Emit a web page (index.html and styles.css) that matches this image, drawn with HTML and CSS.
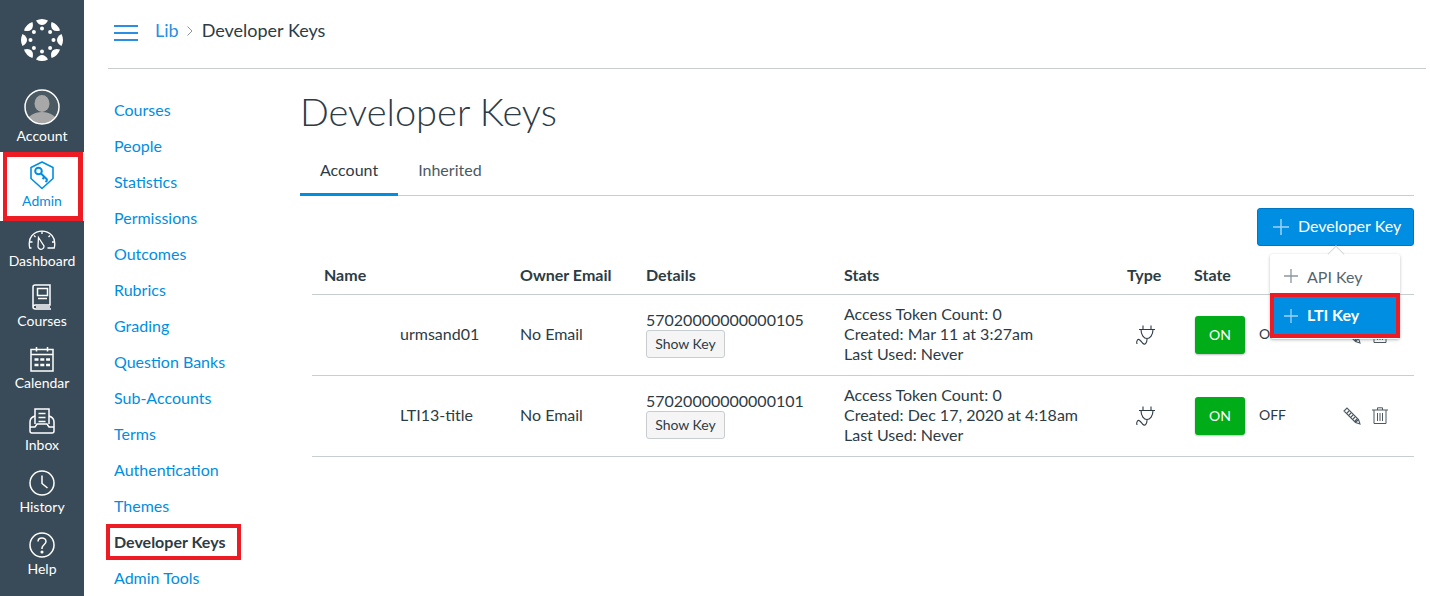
FILE: index.html
```html
<!DOCTYPE html>
<html lang="en">
<head>
<meta charset="utf-8">
<title>Developer Keys</title>
<link rel="stylesheet" href="styles.css">
</head>
<body>
<div class="app">
  <nav class="rail">
    <a class="rail-logo">
      <svg width="44" height="44" viewBox="-22 -22 44 44" fill="#fff">
        <g id="petals">
          <path d="M-6-19.500Q0-22.500 6-19.500Q3.500-15 0-15T-6-19.500Z"/>
          <path transform="rotate(45)" d="M-6-19.500Q0-22.500 6-19.500Q3.500-15 0-15T-6-19.500Z"/>
          <path transform="rotate(90)" d="M-6-19.500Q0-22.500 6-19.500Q3.500-15 0-15T-6-19.500Z"/>
          <path transform="rotate(135)" d="M-6-19.500Q0-22.500 6-19.500Q3.500-15 0-15T-6-19.500Z"/>
          <path transform="rotate(180)" d="M-6-19.500Q0-22.500 6-19.500Q3.500-15 0-15T-6-19.500Z"/>
          <path transform="rotate(225)" d="M-6-19.500Q0-22.500 6-19.500Q3.500-15 0-15T-6-19.500Z"/>
          <path transform="rotate(270)" d="M-6-19.500Q0-22.500 6-19.500Q3.500-15 0-15T-6-19.500Z"/>
          <path transform="rotate(315)" d="M-6-19.500Q0-22.500 6-19.500Q3.500-15 0-15T-6-19.500Z"/>
        </g>
        <circle cx="0" cy="-11.500" r="2"/><circle cx="8.100" cy="-8.100" r="2"/><circle cx="11.500" cy="0" r="2"/><circle cx="8.100" cy="8.100" r="2"/><circle cx="0" cy="11.500" r="2"/><circle cx="-8.100" cy="8.100" r="2"/><circle cx="-11.500" cy="0" r="2"/><circle cx="-8.100" cy="-8.100" r="2"/>
      </svg>
    </a>
    <a class="rail-item rail-account">
      <svg class="rail-icon" width="36" height="36" viewBox="0 0 36 36">
        <defs><clipPath id="avatar"><circle cx="18" cy="18" r="17"/></clipPath></defs>
        <g clip-path="url(#avatar)"><rect width="36" height="36" fill="#4b5963"/><ellipse cx="18" cy="14.500" rx="7.500" ry="8.500" fill="#a8a8a8"/><ellipse cx="18" cy="33" rx="15" ry="10" fill="#a8a8a8"/></g>
        <circle cx="18" cy="18" r="17" fill="none" stroke="#fff" stroke-width="1.500"/>
      </svg>
      <span>Account</span>
    </a>
    <a class="rail-item rail-admin">
      <svg class="rail-icon" width="26" height="30" viewBox="0 0 26 30" fill="none" stroke="#008ee2" stroke-width="1.600" stroke-linejoin="round">
        <path d="M13 2 24 7.500V18.500L13 28.500 2 18.500V7.500Z"/>
        <circle cx="9.500" cy="11" r="3.300" stroke-width="2"/>
        <path d="M12 13.500 18.500 20M18.500 20l-2 2M15.500 17l-2 2" stroke-width="2"/>
      </svg>
      <span>Admin</span>
    </a>
    <a class="rail-item rail-dash">
      <svg class="rail-icon" width="28" height="20" viewBox="0 0 28 20" fill="none" stroke="#fff" stroke-width="1.300">
        <path d="M3.500 18H1.800C.6 13 1 9 4 5.500 7 2.500 10 1.200 14 1.200s7 1.300 10 4.300c3 3.500 3.400 7.500 2.200 12.500H19.500"/>
        <path d="M10.500 7.500 16 16a3 3 0 0 1-5 2.500 3 3 0 0 1-1-2.500ZM14 1.500V4M22 5.500 20.500 7M6 5.500 7.500 7M2 12h2.500M24 12h2.500"/>
      </svg>
      <span>Dashboard</span>
    </a>
    <a class="rail-item rail-short">
      <svg class="rail-icon" width="20" height="26" viewBox="0 0 20 26" fill="none" stroke="#fff" stroke-width="1.500">
        <path d="M3 1h15v20H3.500C2 21 1 22 1 23s1 2 2.500 2H19M1 23V3c0-1 1-2 2-2M4 23h14"/>
        <rect x="5.500" y="4.500" width="10" height="7"/><path d="M6 14.500h9"/>
      </svg>
      <span>Courses</span>
    </a>
    <a class="rail-item">
      <svg class="rail-icon" width="24" height="26" viewBox="0 0 24 26" fill="none" stroke="#fff" stroke-width="1.500">
        <rect x="1" y="3.500" width="22" height="21.500"/><path d="M1 8.500h22M6.500 1v4.500M17.500 1v4.500"/>
        <path stroke-width="2.600" stroke-dasharray="4 1.800" d="M4.500 13.500h15.500M4.500 19h15.500"/>
      </svg>
      <span>Calendar</span>
    </a>
    <a class="rail-item">
      <svg class="rail-icon" width="26" height="26" viewBox="0 0 26 26" fill="none" stroke="#fff" stroke-width="1.500">
        <path d="M6 16V1h14v15"/><path d="M9.500 5.500h7M9.500 9.500h7M9.500 13.500h7"/>
        <path d="M6 8C3 9 1 11 1 14v9c0 1 1 2 2 2h20c1 0 2-1 2-2v-9c0-3-2-5-5-6M1 19h5l2-3h10l2 3h5"/>
      </svg>
      <span>Inbox</span>
    </a>
    <a class="rail-item">
      <svg class="rail-icon" width="26" height="26" viewBox="0 0 26 26" fill="none" stroke="#fff" stroke-width="1.500">
        <circle cx="13" cy="13" r="12"/><path d="M13 5.500V13.500L18.500 18"/>
      </svg>
      <span>History</span>
    </a>
    <a class="rail-item">
      <svg class="rail-icon" width="26" height="26" viewBox="0 0 26 26" fill="none" stroke="#fff" stroke-width="1.500">
        <circle cx="13" cy="13" r="12"/><path d="M9 9.500C9 7 11 6 13 6s4 1.300 4 3.500c0 3-4 3.500-4 6.500v1"/><circle cx="13" cy="20" r=".8" fill="#fff"/>
      </svg>
      <span>Help</span>
    </a>
  </nav>
  <div class="main">
    <header class="topbar">
      <svg class="burger" width="24" height="18" viewBox="0 0 24 18" stroke="#2a8fe0" stroke-width="2"><path d="M0 2h24M0 9h24M0 16h24"/></svg>
      <a class="crumb-link">Lib</a>
      <svg class="crumb-sep" width="6" height="10" viewBox="0 0 6 10" fill="none" stroke="#8b969e"><path d="M.5.500 5 5 .5 9.500"/></svg>
      <span class="crumb-current">Developer Keys</span>
    </header>
    <div class="body">
      <ul class="subnav">
        <li><a>Courses</a></li>
        <li><a>People</a></li>
        <li><a>Statistics</a></li>
        <li><a>Permissions</a></li>
        <li><a>Outcomes</a></li>
        <li><a>Rubrics</a></li>
        <li><a>Grading</a></li>
        <li><a>Question Banks</a></li>
        <li><a>Sub-Accounts</a></li>
        <li><a>Terms</a></li>
        <li><a>Authentication</a></li>
        <li><a>Themes</a></li>
        <li class="current"><a>Developer Keys</a></li>
        <li><a>Admin Tools</a></li>
      </ul>
      <section class="content">
        <h1>Developer Keys</h1>
        <div class="tabs">
          <a class="tab active">Account</a>
          <a class="tab">Inherited</a>
        </div>
        <div class="actions">
          <button class="add-btn">
            <svg width="18" height="18" viewBox="0 0 18 18" stroke="#9fd3f5" stroke-width="1.500"><path d="M9 1v16M1 9h16"/></svg>
            <span>Developer Key</span>
          </button>
          <div class="menu">
            <a class="menu-item">
              <svg width="14" height="14" viewBox="0 0 14 14" stroke="#8b969e" stroke-width="1.300"><path d="M7 0v14M0 7h14"/></svg>
              <span>API Key</span>
            </a>
            <a class="menu-item selected">
              <svg width="14" height="14" viewBox="0 0 14 14" stroke="#9fd3f5" stroke-width="1.300"><path d="M7 0v14M0 7h14"/></svg>
              <span>LTI Key</span>
            </a>
          </div>
        </div>
        <table class="keys">
          <colgroup><col class="c-name"><col class="c-email"><col class="c-details"><col class="c-stats"><col class="c-type"><col class="c-state"></colgroup>
          <thead>
            <tr><th>Name</th><th>Owner Email</th><th>Details</th><th>Stats</th><th>Type</th><th>State</th></tr>
          </thead>
          <tbody>
            <tr>
              <td class="name">urmsand01</td>
              <td class="email">No Email</td>
              <td class="details">57020000000000105<button class="show">Show Key</button></td>
              <td class="stats">Access Token Count: 0<br>Created: Mar 11 at 3:27am<br>Last Used: Never</td>
              <td><svg class="plug" width="20" height="24" viewBox="0 0 20 24" fill="none" stroke="#2d3b45" stroke-width="1.100"><path d="M7 2.500v4M15 2.500v4M3 6.500h16M5 6.500C5 12 8 15.500 11 15.500S17 12 17 6.500M11 15.500v1c0 3-2 6-4 4S3 15 1.500 17 1 20 1 21"/></svg></td>
              <td>
                <div class="state">
                  <button class="on">ON</button><span class="off">OFF</span>
                  <svg class="pencil" width="18" height="18" viewBox="0 0 18 18" fill="none" stroke="#4b5963" stroke-width="1.100"><path d="M17 17l-4.500-1.500L1 4l3-3 11.500 11.500ZM17 17l-1.500-4.500M12.500 15.500l3-3M14 12l-2 2M10 8l-2 2M6 4 4 6M8 6l-2 2M12 10l-2 2"/></svg>
                  <svg class="trash" width="16" height="17" viewBox="0 0 16 17" fill="none" stroke="#4b5963" stroke-width="1"><path d="M0 3h16M5.500 3V.8h5V3M2 3v13.500h12V3M5.500 6v8M8 6v8M10.500 6v8"/></svg>
                </div>
              </td>
            </tr>
            <tr>
              <td class="name">LTI13-title</td>
              <td class="email">No Email</td>
              <td class="details">57020000000000101<button class="show">Show Key</button></td>
              <td class="stats">Access Token Count: 0<br>Created: Dec 17, 2020 at 4:18am<br>Last Used: Never</td>
              <td><svg class="plug" width="20" height="24" viewBox="0 0 20 24" fill="none" stroke="#2d3b45" stroke-width="1.100"><path d="M7 2.500v4M15 2.500v4M3 6.500h16M5 6.500C5 12 8 15.500 11 15.500S17 12 17 6.500M11 15.500v1c0 3-2 6-4 4S3 15 1.500 17 1 20 1 21"/></svg></td>
              <td>
                <div class="state">
                  <button class="on">ON</button><span class="off">OFF</span>
                  <svg class="pencil" width="18" height="18" viewBox="0 0 18 18" fill="none" stroke="#4b5963" stroke-width="1.100"><path d="M17 17l-4.500-1.500L1 4l3-3 11.500 11.500ZM17 17l-1.500-4.500M12.500 15.500l3-3M14 12l-2 2M10 8l-2 2M6 4 4 6M8 6l-2 2M12 10l-2 2"/></svg>
                  <svg class="trash" width="16" height="17" viewBox="0 0 16 17" fill="none" stroke="#4b5963" stroke-width="1"><path d="M0 3h16M5.500 3V.8h5V3M2 3v13.500h12V3M5.500 6v8M8 6v8M10.500 6v8"/></svg>
                </div>
              </td>
            </tr>
          </tbody>
        </table>
      </section>
    </div>
  </div>
</div>
</body>
</html>
```
FILE: styles.css
```css
* { box-sizing: border-box; }
html, body { margin: 0; height: 596px; overflow: hidden; background: #fff; }
body { font-family: Lato, "Noto Sans", sans-serif; font-size: 16px; color: #2d3b45; }
a { text-decoration: none; }
button { font-family: inherit; }
.app { display: flex; height: 596px; }

.rail { width: 84px; flex: none; background: #394b58; color: #fff; display: flex; flex-direction: column; align-items: center; padding-top: 18px; }
.rail-logo { height: 71px; display: flex; justify-content: center; }
.rail-item { width: 100%; height: 62px; display: flex; flex-direction: column; align-items: center; justify-content: flex-end; padding-bottom: 1px; color: #fff; font-size: 14px; line-height: 18px; }
.rail-short { height: 60px; }
.rail-dash { height: 50px; }
.rail-icon { flex: none; margin-bottom: 2px; }
.rail-account { height: 57px; }
.rail-admin { position: relative; height: 69px; margin-top: 6px; background: #fff; color: #008ee2; padding-bottom: 11px; }
.rail-admin::after { content: ""; position: absolute; top: 0; right: 1px; bottom: 0; left: 3px; border: 5px solid #ed1c24; border-left-width: 4px; }

.main { flex: 1; min-width: 0; padding: 0 4px 0 24px; }
.topbar { height: 69px; border-bottom: 1px solid #c7cdd1; display: flex; align-items: center; padding: 0 0 8px 6px; font-size: 18px; }
.burger { margin: 6px 17px 0 0; }
.crumb-link { color: #2a8fe0; }
.crumb-sep { margin: 2px 9px 0 8px; }
.crumb-current { color: #2d3b45; }

.body { display: flex; }
.subnav { list-style: none; margin: 0; padding: 23px 0 0 0; width: 192px; flex: none; }
.subnav li { height: 36px; line-height: 36px; padding-left: 6px; }
.subnav a { color: #008ee2; }
.subnav .current { width: 135px; margin: 0 0 0 -2px; padding-left: 8px; outline: 4px solid #ed1c24; outline-offset: -4px; }
.subnav .current a { color: #2d3b45; font-weight: 700; }

.content { flex: 1; min-width: 0; margin-right: 12px; position: relative; }
h1 { margin: 22px 0 0 0; font-size: 38px; font-weight: 300; line-height: 40px; color: #2d3b45; height: 40px; }
.tabs { display: flex; margin-top: 24px; height: 41px; border-bottom: 1px solid #c7cdd1; }
.tab { padding: 0 20px; line-height: 30px; color: #2d3b45; height: 41px; }
.tab.active { border-bottom: 3px solid #008ee2; }
.tab:not(.active) { color: #4b5963; }
.actions { display: flex; justify-content: flex-end; padding-top: 12px; position: relative; height: 51px; }
.add-btn { width: 157px; height: 38px; border: 1px solid #0077c2; border-radius: 3px; background: #008ee2; color: #fff; font-size: 16px; display: flex; align-items: center; gap: 8px; padding: 0 0 0 14px; }
.add-btn span { margin-top: -3px; }
.menu { position: absolute; z-index: 2; top: 58px; right: 14px; width: 130px; height: 85px; background: #fff; border-radius: 3px; box-shadow: 0 1px 3px rgba(45,59,69,.35); padding-top: 5px; }
.menu::before { content: ""; position: absolute; top: -6px; left: 60px; width: 11px; height: 11px; background: #fff; transform: rotate(45deg); border-left: 1px solid #d5d9dc; border-top: 1px solid #d5d9dc; }
.menu-item { position: relative; display: flex; align-items: center; gap: 9px; height: 34px; padding-left: 14px; color: #56646e; }
.menu-item.selected { height: 45px; background: #008ee2; color: #fff; font-weight: 700; outline: 4px solid #ed1c24; outline-offset: -4px; }
.menu-item.selected span { margin-top: -2px; }

.keys { width: 1102px; margin-left: 12px; border-collapse: collapse; table-layout: fixed; }
.c-name { width: 196px; }
.c-email { width: 126px; }
.c-details { width: 198px; }
.c-stats { width: 283px; }
.c-type { width: 67px; }
.keys th { height: 47px; padding: 8px 0 0 12px; text-align: left; font-weight: 700; border-bottom: 1px solid #c7cdd1; }
.keys td { height: 81px; padding: 0 0 0 12px; border-bottom: 1px solid #c7cdd1; line-height: 20px; }
.keys .name { padding-left: 88px; padding-bottom: 2px; }
.keys .email, .keys .details, .keys .stats { padding-bottom: 2px; }
.show { display: block; height: 28px; width: 79px; padding: 0; border: 1px solid #c7cdd1; border-radius: 3px; background: #f5f5f5; color: #2d3b45; font-size: 14px; }
.plug { display: block; margin: 0 0 0 9px; }
.state { display: flex; align-items: center; }
.on { width: 50px; height: 38px; border: 0; border-radius: 3px; background: #00ac18; color: #fff; font-size: 14px; font-weight: 400; padding: 0; box-shadow: 0 1px 2px rgba(0,0,0,.25); margin-left: 1px; }
.off { margin: 0 0 2px 14px; font-size: 14px; color: #2d3b45; width: 84px; }
.pencil { margin-right: 11px; flex: none; }
.trash { flex: none; }
```
